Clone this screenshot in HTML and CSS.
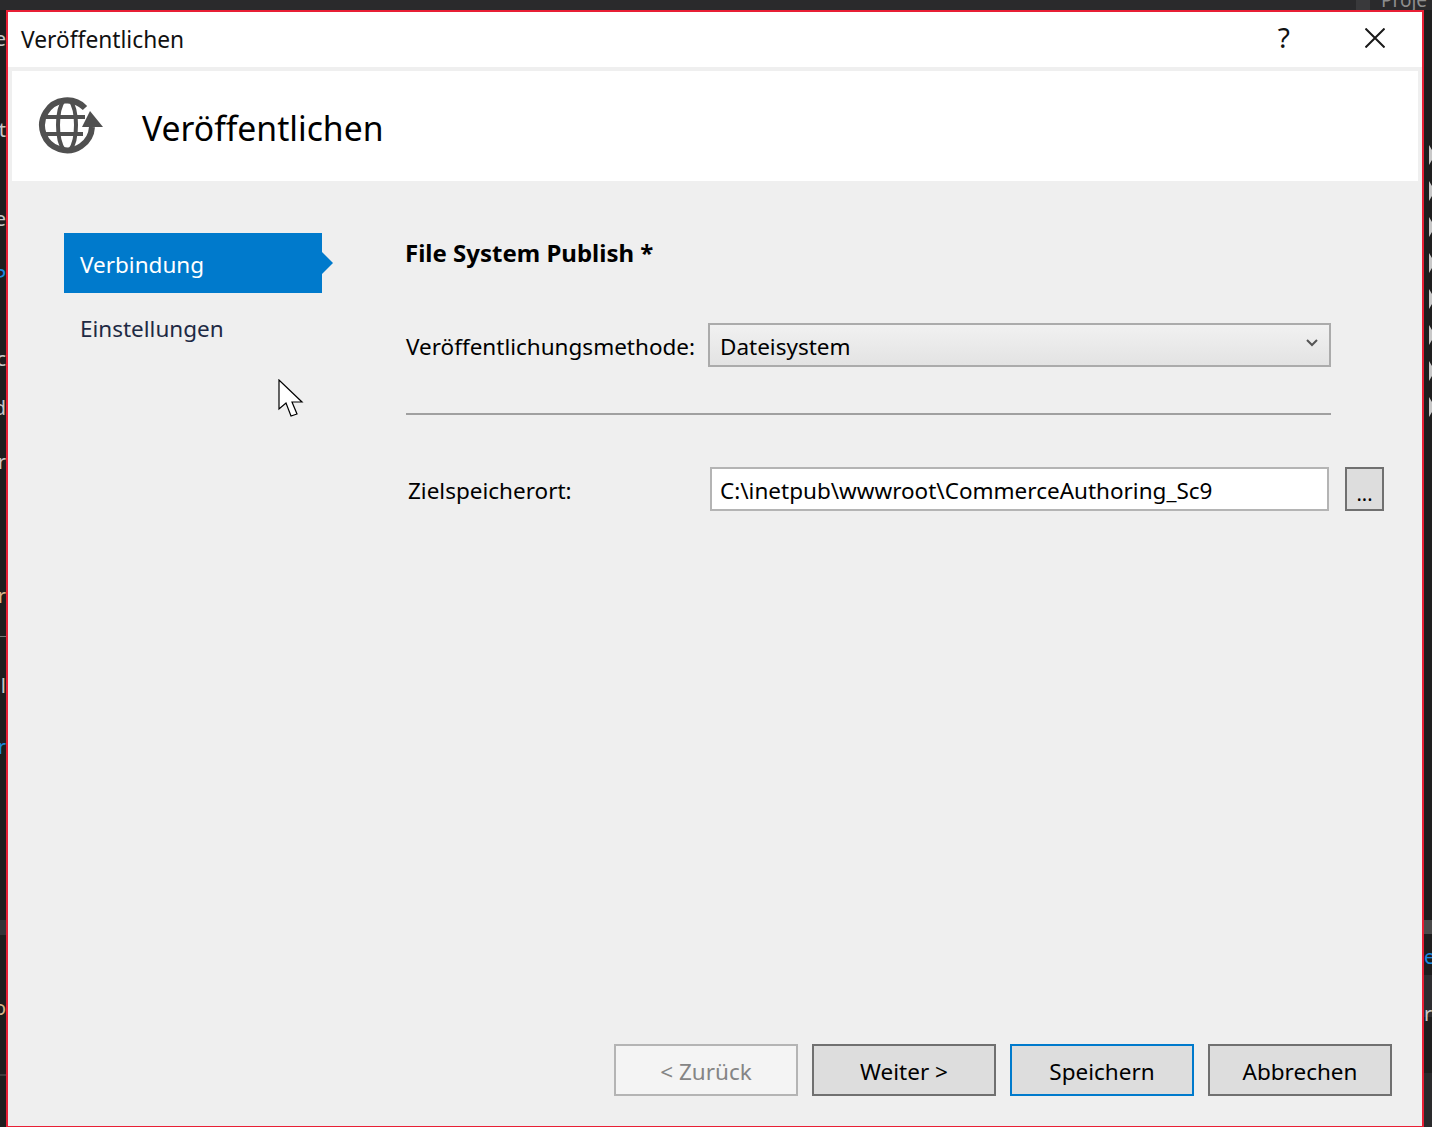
FILE: index.html
```html
<!DOCTYPE html>
<html lang="de">

<head>
    <meta charset="UTF-8">
    <meta name="viewport" content="width=device-width, initial-scale=1.0">
    <title>Veröffentlichen</title>
    <link rel="stylesheet" href="styles.css">
</head>

<body>
    <div class="ide-top">
        <span class="ide-tab"></span>
        <span class="ide-proj">Proje</span>
    </div>
    <div class="desk">
        <div class="ide-left">
            <span class="band b1"></span>
            <span class="band b2"></span>
            <span class="frag f1">e</span>
            <span class="frag f2">t</span>
            <span class="frag f3">e</span>
            <span class="frag f4 blue">P</span>
            <span class="frag f5">c</span>
            <span class="frag f6">d</span>
            <span class="frag f7">r</span>
            <span class="frag f8 tan">r</span>
            <span class="ide-line"></span>
            <span class="frag f9">l</span>
            <span class="frag f10 blue">r</span>
            <span class="frag f11 tan">o</span>
        </div>

        <main class="dialog">
            <div class="titlebar">
                <span class="titlebar-text">Veröffentlichen</span>
                <span class="help">?</span>
                <svg class="close" viewBox="0 0 20 20" width="20" height="20">
                    <path d="M0.5 0.5L19.500 19.500M19.500 0.5L0.5 19.500" stroke="#1a1a1a" stroke-width="2" fill="none" />
                </svg>
            </div>
            <div class="header">
                <svg class="globe" viewBox="0 0 66 58" width="66" height="58">
                    <g fill="none" stroke="#505050">
                        <path d="M47 12A25 25 0 1 0 54 31" stroke-width="6" />
                        <path d="M6 21H47M6 38H45" stroke-width="4" />
                        <path d="M26 4C18 14 18 44 26 54M32 4C40 14 40 44 32 54" stroke-width="4" />
                    </g>
                    <path d="M44 31L52 15L65 31Z" fill="#505050" />
                </svg>
                <h1>Veröffentlichen</h1>
            </div>

            <div class="body">
                <nav class="nav">
                    <a class="nav-item active">Verbindung</a>
                    <a class="nav-item">Einstellungen</a>
                </nav>
                <section class="form">
                    <h2>File System Publish *</h2>
                    <div class="row row-method">
                        <label>Veröffentlichungsmethode:</label>
                        <div class="select">
                            <span>Dateisystem</span>
                            <svg viewBox="0 0 12 8" width="12" height="8">
                                <path d="M1 1L6 6L11 1" stroke="#555" stroke-width="2" fill="none" />
                            </svg>
                        </div>
                    </div>
                    <div class="divider"></div>
                    <div class="row row-target">
                        <label>Zielspeicherort:</label>
                        <div class="text-input">C:\inetpub\wwwroot\CommerceAuthoring_Sc9</div>
                        <button class="browse">...</button>
                    </div>
                </section>
            </div>

            <div class="footer">
                <button class="btn disabled">&lt; Zurück</button>
                <button class="btn">Weiter &gt;</button>
                <button class="btn primary">Speichern</button>
                <button class="btn">Abbrechen</button>
            </div>

            <svg class="cursor" viewBox="0 0 26 40" width="26" height="40">
                <path d="M1 1V30L8 24L13 37L19 35L14 23H24Z" fill="#fff" stroke="#000" stroke-width="1.200" />
            </svg>
        </main>

        <div class="ide-right">
            <span class="band b3"></span>
            <span class="band b4"></span>
            <span class="band b5"></span>
            <i class="tri"></i><i class="tri"></i><i class="tri"></i><i class="tri"></i>
            <i class="tri"></i><i class="tri"></i><i class="tri"></i><i class="tri"></i>
            <span class="frag-r r1">e</span>
            <span class="frag-r r2">r</span>
        </div>
    </div>
</body>

</html>
```

FILE: styles.css
```css
* {
    margin: 0;
    padding: 0;
    box-sizing: border-box;
}

html,
body {
    width: 100%;
    height: 100%;
    overflow: hidden;
    background-color: #1e1e1e;
    font-family: "Noto Sans", "Open Sans", sans-serif;
}

.ide-top {
    display: flex;
    height: 10px;
    background-color: #2a2a2c;
    overflow: hidden;
    padding-left: 1356px;
}

.ide-tab {
    width: 14px;
    height: 10px;
    margin-right: 11px;
    background-color: #39393b;
}

.ide-proj {
    display: block;
    margin-top: -10px;
    font-size: 19px;
    line-height: 20px;
    color: #8d8d8d;
}

.desk {
    display: flex;
    height: 1117px;
}

.ide-left {
    position: relative;
    width: 6px;
    overflow: hidden;
    flex: none;
}

.frag {
    position: absolute;
    left: -7px;
    width: 13px;
    text-align: right;
    font-size: 20px;
    line-height: 20px;
    color: #c8c8c8;
}

.frag.blue {
    color: #1b8ae0;
}

.frag.tan {
    color: #d7b48a;
}

.f1 { top: 19px; }
.f2 { top: 110px; }
.f3 { top: 199px; }
.f4 { top: 256px; }
.f5 { top: 339px; }
.f6 { top: 388px; }
.f7 { top: 442px; }
.f8 { top: 576px; }
.f9 { top: 666px; }
.f10 { top: 727px; }
.f11 { top: 988px; }

.ide-line {
    position: absolute;
    top: 626px;
    left: 0;
    width: 6px;
    height: 1px;
    background-color: #777;
}

.band {
    position: absolute;
    left: 0;
    width: 100%;
}

.b1 { top: 910px; height: 15px; background-color: #333337; }
.b2 { top: 1064px; height: 2px; background-color: #3c3c3c; }
.b3 { top: 910px; height: 14px; background-color: #4a4a4a; }
.b4 { top: 965px; height: 42px; background-color: #2d2d30; }
.b5 { top: 1063px; height: 54px; background-color: #2a2a2c; }

.dialog {
    position: relative;
    width: 1418px;
    flex: none;
    display: flex;
    flex-direction: column;
    background-color: #efefef;
    border: 2px solid #e81f35;
    border-bottom-width: 1px;
}

.titlebar {
    display: flex;
    align-items: center;
    height: 55px;
    padding: 0 37px 0 13px;
    background-color: #fff;
    color: #111;
}

.titlebar-text {
    flex: 1;
    font-size: 22.750px;
}

.help {
    font-size: 28px;
    margin-right: 75px;
    margin-top: -5px;
}

.close {
    margin-top: -3px;
}

.header {
    display: flex;
    align-items: center;
    height: 110px;
    margin: 4px 4px 0;
    background-color: #fff;
    padding-left: 26px;
}

.globe {
    margin-right: 38px;
    margin-bottom: 2px;
}

.header h1 {
    font-size: 33.700px;
    font-weight: 400;
    margin-top: 4px;
    color: #000;
}

.body {
    flex: 1;
    display: flex;
    padding: 52px 0 0 56px;
}

.nav {
    width: 269px;
    flex: none;
    font-size: 22.500px;
}

.nav-item {
    position: relative;
    display: flex;
    align-items: center;
    width: 258px;
    height: 60px;
    padding-left: 16px;
    margin-bottom: 5px;
    color: #1e2a44;
}

.nav-item.active {
    padding-top: 3px;
    background-color: #007acc;
    color: #fff;
}

.nav-item.active::after {
    content: "";
    position: absolute;
    left: 100%;
    top: 19px;
    border-left: 11px solid #007acc;
    border-top: 11px solid transparent;
    border-bottom: 11px solid transparent;
}

.form {
    flex: none;
    width: 1060px;
    padding-left: 72px;
    color: #000;
    font-size: 22.500px;
}

.form h2 {
    font-size: 24px;
    font-weight: 700;
    height: 40px;
    line-height: 40px;
    margin-bottom: 50px;
}

.row {
    display: flex;
    align-items: center;
    height: 44px;
}

.row label {
    flex: none;
    width: 302px;
    padding-top: 2px;
}

.row-method {
    padding-left: 1px;
}

.select {
    flex: none;
    width: 623px;
    height: 44px;
    display: flex;
    align-items: center;
    justify-content: space-between;
    padding: 2px 11px 0 10px;
    border: 2px solid #ababab;
    background: linear-gradient(#f1f1f1, #e3e3e3);
}

.select svg {
    margin-top: -6px;
}

.divider {
    width: 925px;
    height: 2px;
    margin: 46px 0 52px 1px;
    background-color: #a0a0a0;
}

.row-target {
    padding-left: 3px;
}

.text-input {
    flex: none;
    width: 619px;
    height: 44px;
    display: flex;
    align-items: center;
    padding: 2px 0 0 8px;
    background-color: #fff;
    border: 2px solid #b4b4b4;
}

.browse {
    flex: none;
    width: 39px;
    height: 44px;
    margin-left: 16px;
    padding-top: 8px;
    border: 2px solid #707070;
    background-color: #dddddd;
    font-family: inherit;
    font-size: 20px;
    color: #000;
}

.footer {
    display: flex;
    justify-content: flex-end;
    gap: 14px;
    height: 82px;
    padding-right: 30px;
}

.btn {
    width: 184px;
    height: 52px;
    padding-top: 2px;
    border: 2px solid #707070;
    background-color: #dddddd;
    font-family: inherit;
    font-size: 22.500px;
    color: #000;
}

.btn.disabled {
    border-color: #b4b4b4;
    background-color: #f4f4f4;
    color: #858585;
}

.btn.primary {
    border-color: #007acc;
}

.cursor {
    position: absolute;
    left: 270px;
    top: 367px;
}

.ide-right {
    position: relative;
    flex: 1;
    overflow: hidden;
    padding-top: 135px;
    display: flex;
    flex-direction: column;
    align-items: flex-end;
}

.tri {
    display: block;
    width: 3px;
    height: 20px;
    margin-bottom: 16px;
    background-color: #c8c8c8;
    clip-path: polygon(0 0, 100% 25%, 100% 75%, 0 100%);
}

.frag-r {
    position: absolute;
    left: 0;
    font-size: 20px;
    line-height: 20px;
}

.r1 { top: 937px; color: #1b8ae0; }
.r2 { top: 994px; color: #c8c8c8; }
```
